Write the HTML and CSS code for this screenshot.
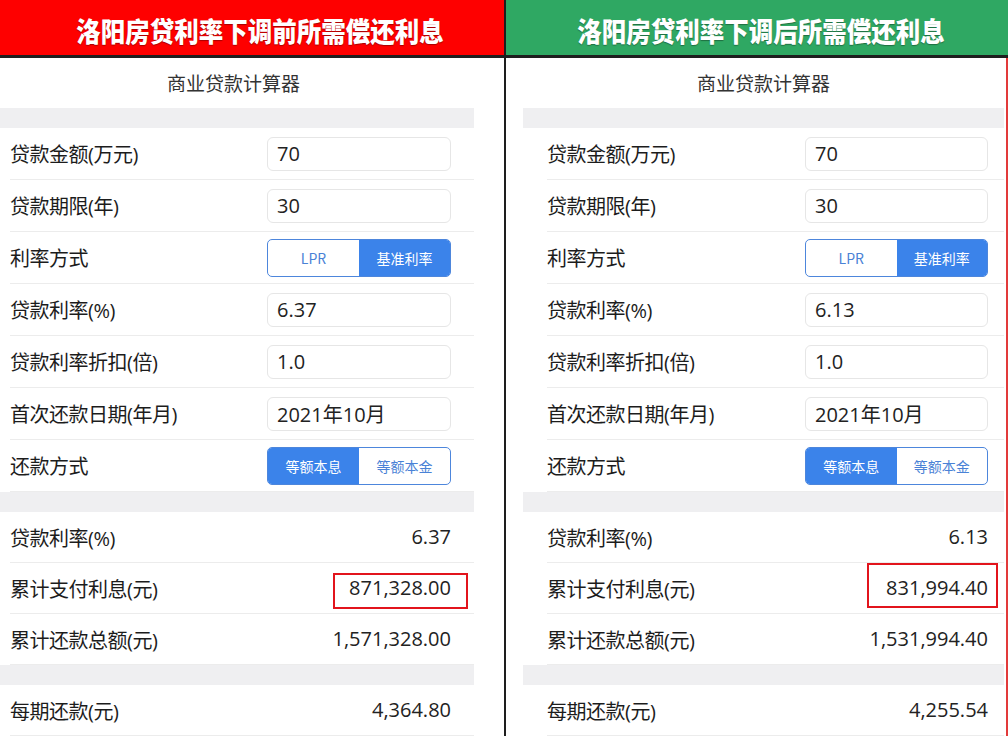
FILE: index.html
```html
<!DOCTYPE html>
<html lang="zh-CN">

<head>
    <meta charset="UTF-8">
    <meta name="viewport" content="width=device-width, initial-scale=1.0">
    <title>洛阳房贷利率下调前后对比</title>
    <link rel="stylesheet" href="styles.css">
</head>

<body>
    <div class="compare">
        <div class="head head-before"><span>洛阳房贷利率下调前所需偿还利息</span></div>
        <div class="head head-after"><span>洛阳房贷利率下调后所需偿还利息</span></div>

        <!-- 下调前 -->
        <div class="panel panel-before">
            <div class="screen">
                <div class="calc-title">商业贷款计算器</div>
                <div class="band"></div>
                <div class="row"><span class="label">贷款金额(万元)</span><input class="field" value="70" readonly></div>
                <div class="row"><span class="label">贷款期限(年)</span><input class="field" value="30" readonly></div>
                <div class="row"><span class="label">利率方式</span>
                    <div class="seg"><span>LPR</span><span class="on">基准利率</span></div>
                </div>
                <div class="row"><span class="label">贷款利率(%)</span><input class="field" value="6.37" readonly></div>
                <div class="row"><span class="label">贷款利率折扣(倍)</span><input class="field" value="1.0" readonly></div>
                <div class="row"><span class="label">首次还款日期(年月)</span><input class="field" value="2021年10月" readonly></div>
                <div class="row"><span class="label">还款方式</span>
                    <div class="seg"><span class="on">等额本息</span><span>等额本金</span></div>
                </div>
                <div class="band"></div>
                <div class="row result"><span class="label">贷款利率(%)</span><span class="value">6.37</span></div>
                <div class="row result"><span class="label">累计支付利息(元)</span><span class="value mark">871,328.00</span></div>
                <div class="row result"><span class="label">累计还款总额(元)</span><span class="value">1,571,328.00</span></div>
                <div class="band"></div>
                <div class="row result"><span class="label">每期还款(元)</span><span class="value">4,364.80</span></div>
            </div>
        </div>

        <!-- 下调后 -->
        <div class="panel panel-after">
            <div class="screen">
                <div class="calc-title">商业贷款计算器</div>
                <div class="band"></div>
                <div class="row"><span class="label">贷款金额(万元)</span><input class="field" value="70" readonly></div>
                <div class="row"><span class="label">贷款期限(年)</span><input class="field" value="30" readonly></div>
                <div class="row"><span class="label">利率方式</span>
                    <div class="seg"><span>LPR</span><span class="on">基准利率</span></div>
                </div>
                <div class="row"><span class="label">贷款利率(%)</span><input class="field" value="6.13" readonly></div>
                <div class="row"><span class="label">贷款利率折扣(倍)</span><input class="field" value="1.0" readonly></div>
                <div class="row"><span class="label">首次还款日期(年月)</span><input class="field" value="2021年10月" readonly></div>
                <div class="row"><span class="label">还款方式</span>
                    <div class="seg"><span class="on">等额本息</span><span>等额本金</span></div>
                </div>
                <div class="band"></div>
                <div class="row result"><span class="label">贷款利率(%)</span><span class="value">6.13</span></div>
                <div class="row result"><span class="label">累计支付利息(元)</span><span class="value mark">831,994.40</span></div>
                <div class="row result"><span class="label">累计还款总额(元)</span><span class="value">1,531,994.40</span></div>
                <div class="band"></div>
                <div class="row result"><span class="label">每期还款(元)</span><span class="value">4,255.54</span></div>
            </div>
        </div>
    </div>
</body>

</html>
```

FILE: styles.css
```css
body {
    margin: 0;
    font-family: "Open Sans", "Noto Sans CJK SC", sans-serif;
    color: #222;
    background-color: #fff;
}

.compare {
    display: grid;
    grid-template-columns: 504px 502px;
    grid-template-rows: 55px 678px;
    gap: 3px 2px;
    width: 1008px;
    height: 736px;
    overflow: hidden;
    background-color: #1e1e1e;
}

.head {
    display: flex;
    align-items: center;
    justify-content: center;
    padding-top: 5px;
    box-sizing: border-box;
    color: #fff;
    font-family: "Noto Sans CJK SC", sans-serif;
    font-size: 24.5px;
    font-weight: 900;
    text-shadow: 0 1px 1px rgba(0, 0, 0, 0.35);
}

.head span {
    display: inline-block;
    transform: scaleY(1.12);
}

.head-before {
    background-color: #fe0000;
    padding-left: 16px;
}

.head-after {
    background-color: #2fa863;
    padding-left: 8px;
}

.panel {
    background-color: #fff;
    overflow: hidden;
}

.panel-after {
    border-right: 2px solid #e23a3a;
}

.screen {
    width: 481px;
}

.panel-before .screen {
    margin-left: -7px;
}

.panel-after .screen {
    margin-left: 17px;
}

.calc-title {
    height: 50px;
    line-height: 50px;
    text-align: center;
    font-family: "Noto Sans CJK SC", sans-serif;
    font-size: 19px;
    color: #333;
}

.band {
    height: 20px;
    background-color: #efeff1;
}

.row {
    display: flex;
    align-items: center;
    height: 51px;
    border-bottom: 1px solid #ececec;
    font-size: 20px;
}

.panel-before .row {
    margin-left: 17px;
    padding-right: 23px;
}

.panel-after .row {
    margin-left: 24px;
    padding-right: 16px;
}

.row.result {
    height: 50px;
}

.label {
    flex: none;
    width: 257px;
    letter-spacing: -0.5px;
    color: #1c1c1c;
}

.panel-after .label {
    width: 258px;
}

.field {
    width: 184px;
    height: 34px;
    box-sizing: border-box;
    padding: 0 9px;
    border: 1px solid #e6e6e6;
    border-radius: 6px;
    font-family: "Open Sans", "Noto Sans CJK SC", sans-serif;
    font-size: 20px;
    color: #222;
    outline: none;
}

.panel-after .field {
    width: 183px;
}

.seg {
    display: flex;
    width: 184px;
    height: 38px;
    box-sizing: border-box;
    border: 1px solid #4d86dc;
    border-radius: 5px;
    overflow: hidden;
    font-family: "Noto Sans CJK SC", sans-serif;
    font-size: 14px;
}

.panel-after .seg {
    width: 183px;
}

.seg span {
    flex: 1;
    display: flex;
    align-items: center;
    justify-content: center;
    color: #4a82d6;
}

.seg span.on {
    background-color: #3b83ea;
    color: #fff;
}

.value {
    margin-left: auto;
    line-height: 28px;
}

/* 红框标注 */
.mark {
    position: relative;
}

.mark::after {
    content: "";
    position: absolute;
    border: 2px solid #e2141c;
}

.panel-before .mark::after {
    top: -1px;
    bottom: -7px;
    left: -16px;
    right: -17px;
}

.panel-after .mark::after {
    top: -11px;
    bottom: -6px;
    left: -19px;
    right: -10px;
}
```
